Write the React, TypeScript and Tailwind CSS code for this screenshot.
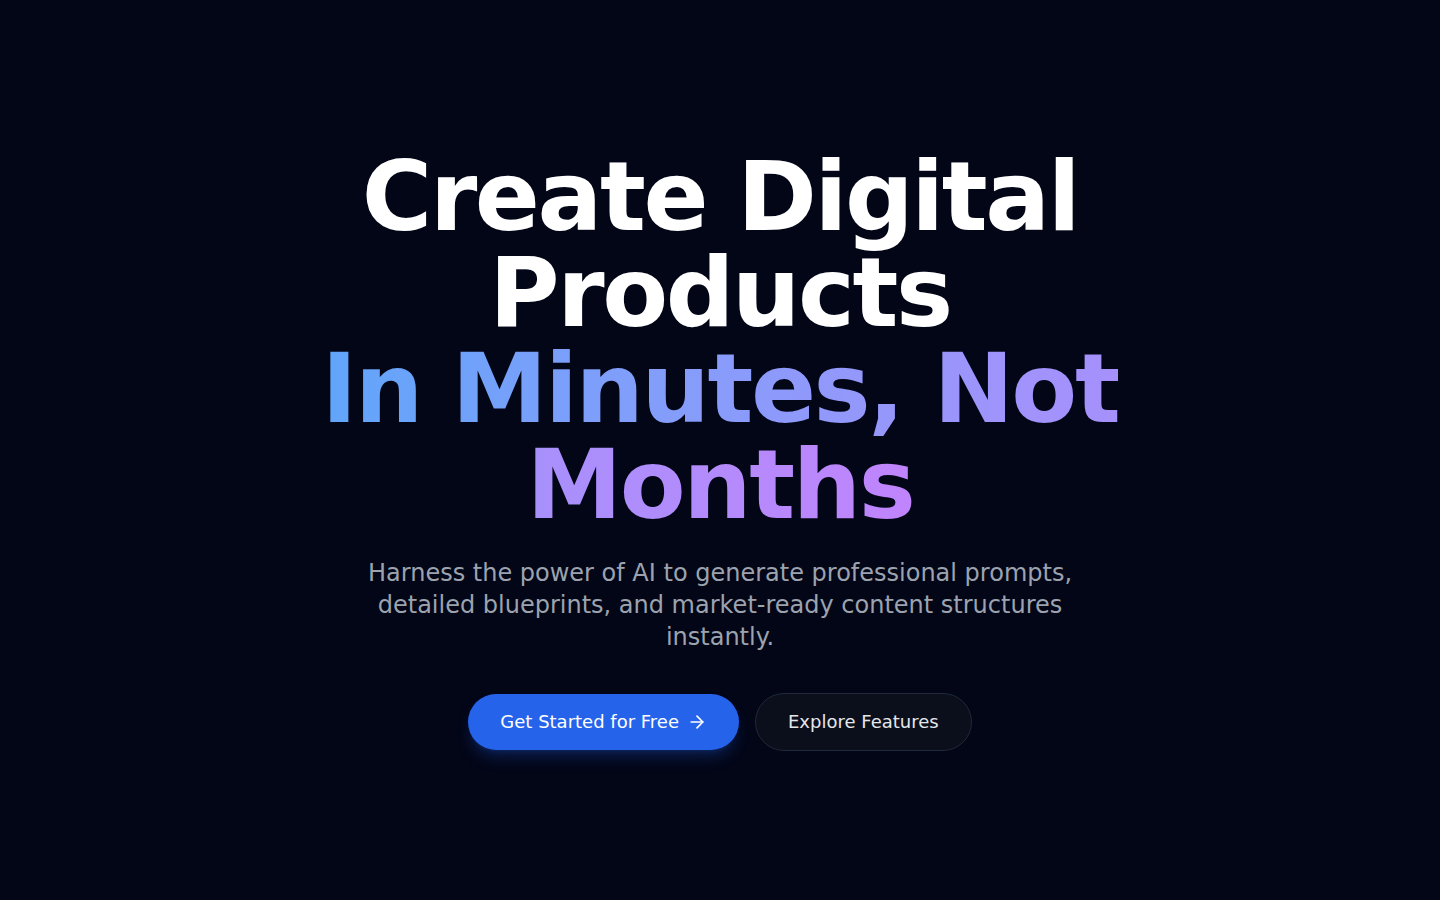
import React from "react";

export default function App() {
  return (
    <div
      className="min-h-screen w-full bg-[#030617] flex items-center justify-center"
      style={{ fontFamily: '"DejaVu Sans", sans-serif' }}
    >
      <main className="flex flex-col items-center text-center px-6">
        <h1 className="text-8xl font-bold leading-none tracking-tight text-white max-w-5xl">
          Create Digital Products
          <br />
          <span className="bg-gradient-to-r from-[#60a5fa] to-[#c084fc] bg-clip-text text-transparent">
            In Minutes, Not Months
          </span>
        </h1>
        <p className="mt-6 max-w-3xl text-2xl leading-8 text-[#9ca3af]">
          Harness the power of AI to generate professional prompts, detailed blueprints, and market-ready content structures instantly.
        </p>
        <div className="mt-10 flex items-center gap-4">
          <button className="flex items-center gap-2 rounded-full bg-[#2563eb] px-8 py-3.5 text-lg leading-7 text-white shadow-lg shadow-[#2563eb]/25">
            Get Started for Free
            <svg width="20" height="20" viewBox="0 0 24 24" fill="none" stroke="currentColor" strokeWidth="2" strokeLinecap="round" strokeLinejoin="round">
              <path d="M5 12h14" />
              <path d="m12 5 7 7-7 7" />
            </svg>
          </button>
          <button className="rounded-full border border-[#1f2937] bg-[#0b0f1c] px-8 py-3.5 text-lg leading-7 text-[#e5e7eb]">
            Explore Features
          </button>
        </div>
      </main>
    </div>
  );
}
